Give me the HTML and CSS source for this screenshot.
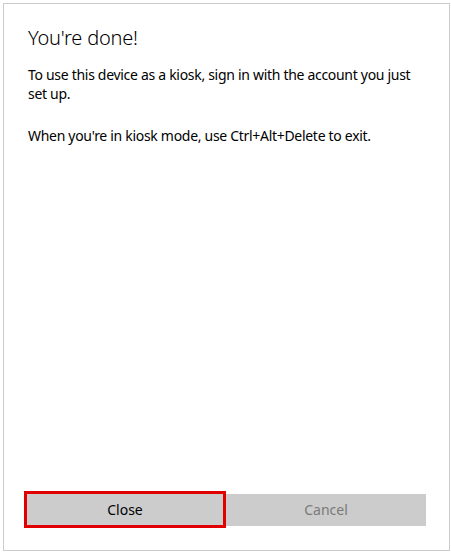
FILE: index.html
```html
<!DOCTYPE html>
<html lang="en">
<head>
<meta charset="utf-8">
<title>You're done!</title>
<link rel="stylesheet" href="styles.css">
</head>
<body>
<div class="frame">
  <div class="content">
    <h1 class="title">You're done!</h1>
    <p class="text">To use this device as a kiosk, sign in with the account you just set up.</p>
    <p class="text">When you're in kiosk mode, use Ctrl+Alt+Delete to exit.</p>
  </div>
  <div class="buttons">
    <button class="btn btn-close">Close</button>
    <button class="btn btn-cancel">Cancel</button>
  </div>
</div>
</body>
</html>
```
FILE: styles.css
```css
html, body {
  margin: 0;
  padding: 0;
  background: #ffffff;
}
body {
  padding: 3px;
  font-family: "Noto Sans", "Open Sans", sans-serif;
  color: #000;
}
.frame {
  box-sizing: border-box;
  width: 447px;
  height: 548px;
  border: 1px solid #cccccc;
  display: flex;
  flex-direction: column;
  padding: 0 23px 22px 20px;
}
.content {
  padding-left: 4px;
}
.title {
  margin: 20px 0 0 0;
  font-size: 20px;
  font-weight: 300;
  letter-spacing: -0.2px;
  line-height: 28px;
}
.text {
  margin: 13px 0 0 0;
  font-size: 14px;
  letter-spacing: -0.3px;
  line-height: 19px;
}
.text + .text {
  margin-top: 23px;
}
.buttons {
  margin-top: auto;
  display: grid;
  grid-template-columns: 202px 200px;
  align-items: center;
}
.btn {
  font-family: inherit;
  font-size: 14px;
  background: #cccccc;
  border: none;
  margin: 0;
  padding: 0;
  height: 32px;
}
.btn-close {
  height: 37px;
  border: 3px solid #e00000;
  color: #000;
}
.btn-cancel {
  color: #7a7a7a;
}
```
